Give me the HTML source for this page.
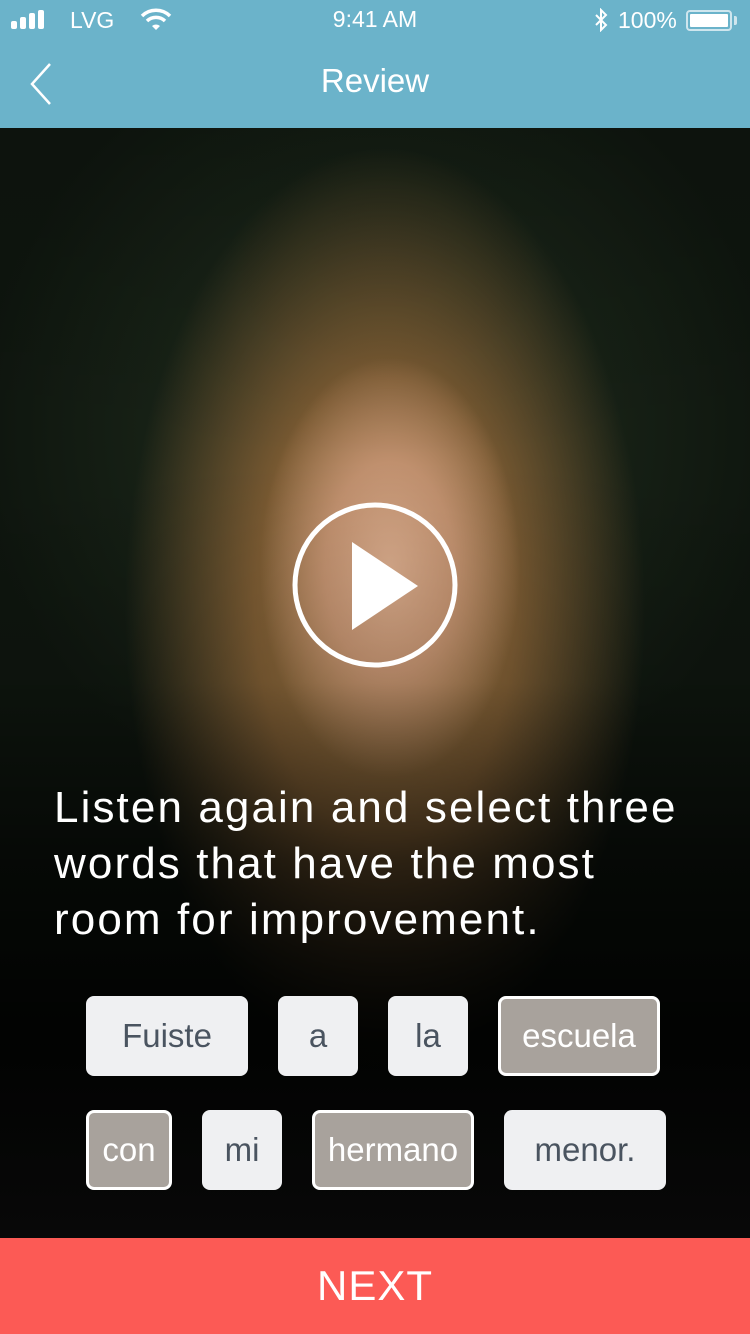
<!DOCTYPE html>
<html><head><meta charset="utf-8"><style>
*{margin:0;padding:0;box-sizing:border-box}
body{width:750px;height:1334px;overflow:hidden;font-family:"Liberation Sans",sans-serif;background:#0a0c0a;position:relative}
.top{position:absolute;left:0;top:0;width:750px;height:128px;background:#6bb3ca;color:#fff}
.photo{position:absolute;left:0;top:128px;width:750px;height:1110px;
background:
radial-gradient(ellipse 130px 210px at 390px 440px, #d6a98a 0%, #c0906e 50%, rgba(150,100,70,0) 100%),
radial-gradient(ellipse 260px 460px at 385px 480px, #a07a48 0%, #7a5a32 50%, rgba(40,30,20,0) 100%),
radial-gradient(ellipse 500px 500px at 380px 300px, #22301f, #0e150e 80%);
}
.fade{position:absolute;left:0;top:128px;width:750px;height:1110px;background:linear-gradient(180deg,rgba(0,0,0,.1) 0%,rgba(0,0,0,0) 30%,rgba(0,0,0,.1) 50%,rgba(0,0,0,.6) 66%,rgba(0,0,0,.88) 82%,#080808 100%)}
.q{position:absolute;left:54px;top:780px;color:#fff;font-size:44px;line-height:56px;letter-spacing:2.1px}
.chip{position:absolute;height:80px;border-radius:8px;background:#eff0f2;color:#4a5460;font-size:33px;display:flex;align-items:center;justify-content:center}
.sel{background:#a8a29c;color:#fff;border:3px solid #fff}
.next{position:absolute;left:0;top:1238px;width:750px;height:96px;background:#fc5a55;color:#fff;font-size:42px;display:flex;align-items:center;justify-content:center;letter-spacing:1px}
</style></head><body>
<div class="top">
 <svg style="position:absolute;left:11px;top:10px" width="36" height="20"><rect x="0" y="11" width="6" height="8" rx="2" fill="#fff"/><rect x="9" y="7" width="6" height="12" rx="2" fill="#fff"/><rect x="18" y="3" width="6" height="16" rx="2" fill="#fff"/><rect x="27" y="0" width="6" height="19" rx="2" fill="#fff"/></svg>
 <div style="position:absolute;left:70px;top:7px;font-size:23px">LVG</div>
 <svg style="position:absolute;left:140px;top:8px" width="32" height="24" viewBox="0 0 32 24"><path d="M2 8 A20 20 0 0 1 30 8" stroke="#fff" stroke-width="3.5" fill="none"/><path d="M7 13 A13 13 0 0 1 25 13" stroke="#fff" stroke-width="3.5" fill="none"/><path d="M12 18 A6 6 0 0 1 20 18 L16 22Z" fill="#fff"/></svg>
 <div style="position:absolute;left:0;width:750px;text-align:center;top:6px;font-size:23px">9:41 AM</div>
 <svg style="position:absolute;left:593px;top:8px" width="16" height="24" viewBox="0 0 16 24"><path d="M3 7 L13 17 L8 22 L8 2 L13 7 L3 17" stroke="#fff" stroke-width="2" fill="none"/></svg>
 <div style="position:absolute;left:618px;top:7px;font-size:23px">100%</div>
 <div style="position:absolute;left:686px;top:10px;width:46px;height:21px;border:2px solid #cfe6ee;border-radius:4px;padding:2px"><div style="background:#fff;width:100%;height:100%;border-radius:1px"></div></div>
 <div style="position:absolute;left:734px;top:16px;width:3px;height:9px;background:#cfe6ee;border-radius:0 2px 2px 0"></div>
 <svg style="position:absolute;left:28px;top:62px" width="26" height="44"><path d="M22 2 L4 22 L22 42" stroke="#fff" stroke-width="2.5" fill="none"/></svg>
 <div style="position:absolute;left:0;width:750px;text-align:center;top:62px;font-size:33px">Review</div>
</div>
<div class="photo"></div>
<div class="fade"></div>
<svg style="position:absolute;left:290px;top:500px" width="170" height="170"><circle cx="85" cy="85" r="80" stroke="#fff" stroke-width="5" fill="none"/><path d="M62 42 L128 86 L62 130Z" fill="#fff"/></svg>
<div class="q">Listen again and select three<br>words that have the most<br>room for improvement.</div>
<div class="chip" style="left:86px;top:996px;width:162px">Fuiste</div>
<div class="chip" style="left:278px;top:996px;width:80px">a</div>
<div class="chip" style="left:388px;top:996px;width:80px">la</div>
<div class="chip sel" style="left:498px;top:996px;width:162px">escuela</div>
<div class="chip sel" style="left:86px;top:1110px;width:86px">con</div>
<div class="chip" style="left:202px;top:1110px;width:80px">mi</div>
<div class="chip sel" style="left:312px;top:1110px;width:162px">hermano</div>
<div class="chip" style="left:504px;top:1110px;width:162px">menor.</div>
<div class="next">NEXT</div>
</body></html>
